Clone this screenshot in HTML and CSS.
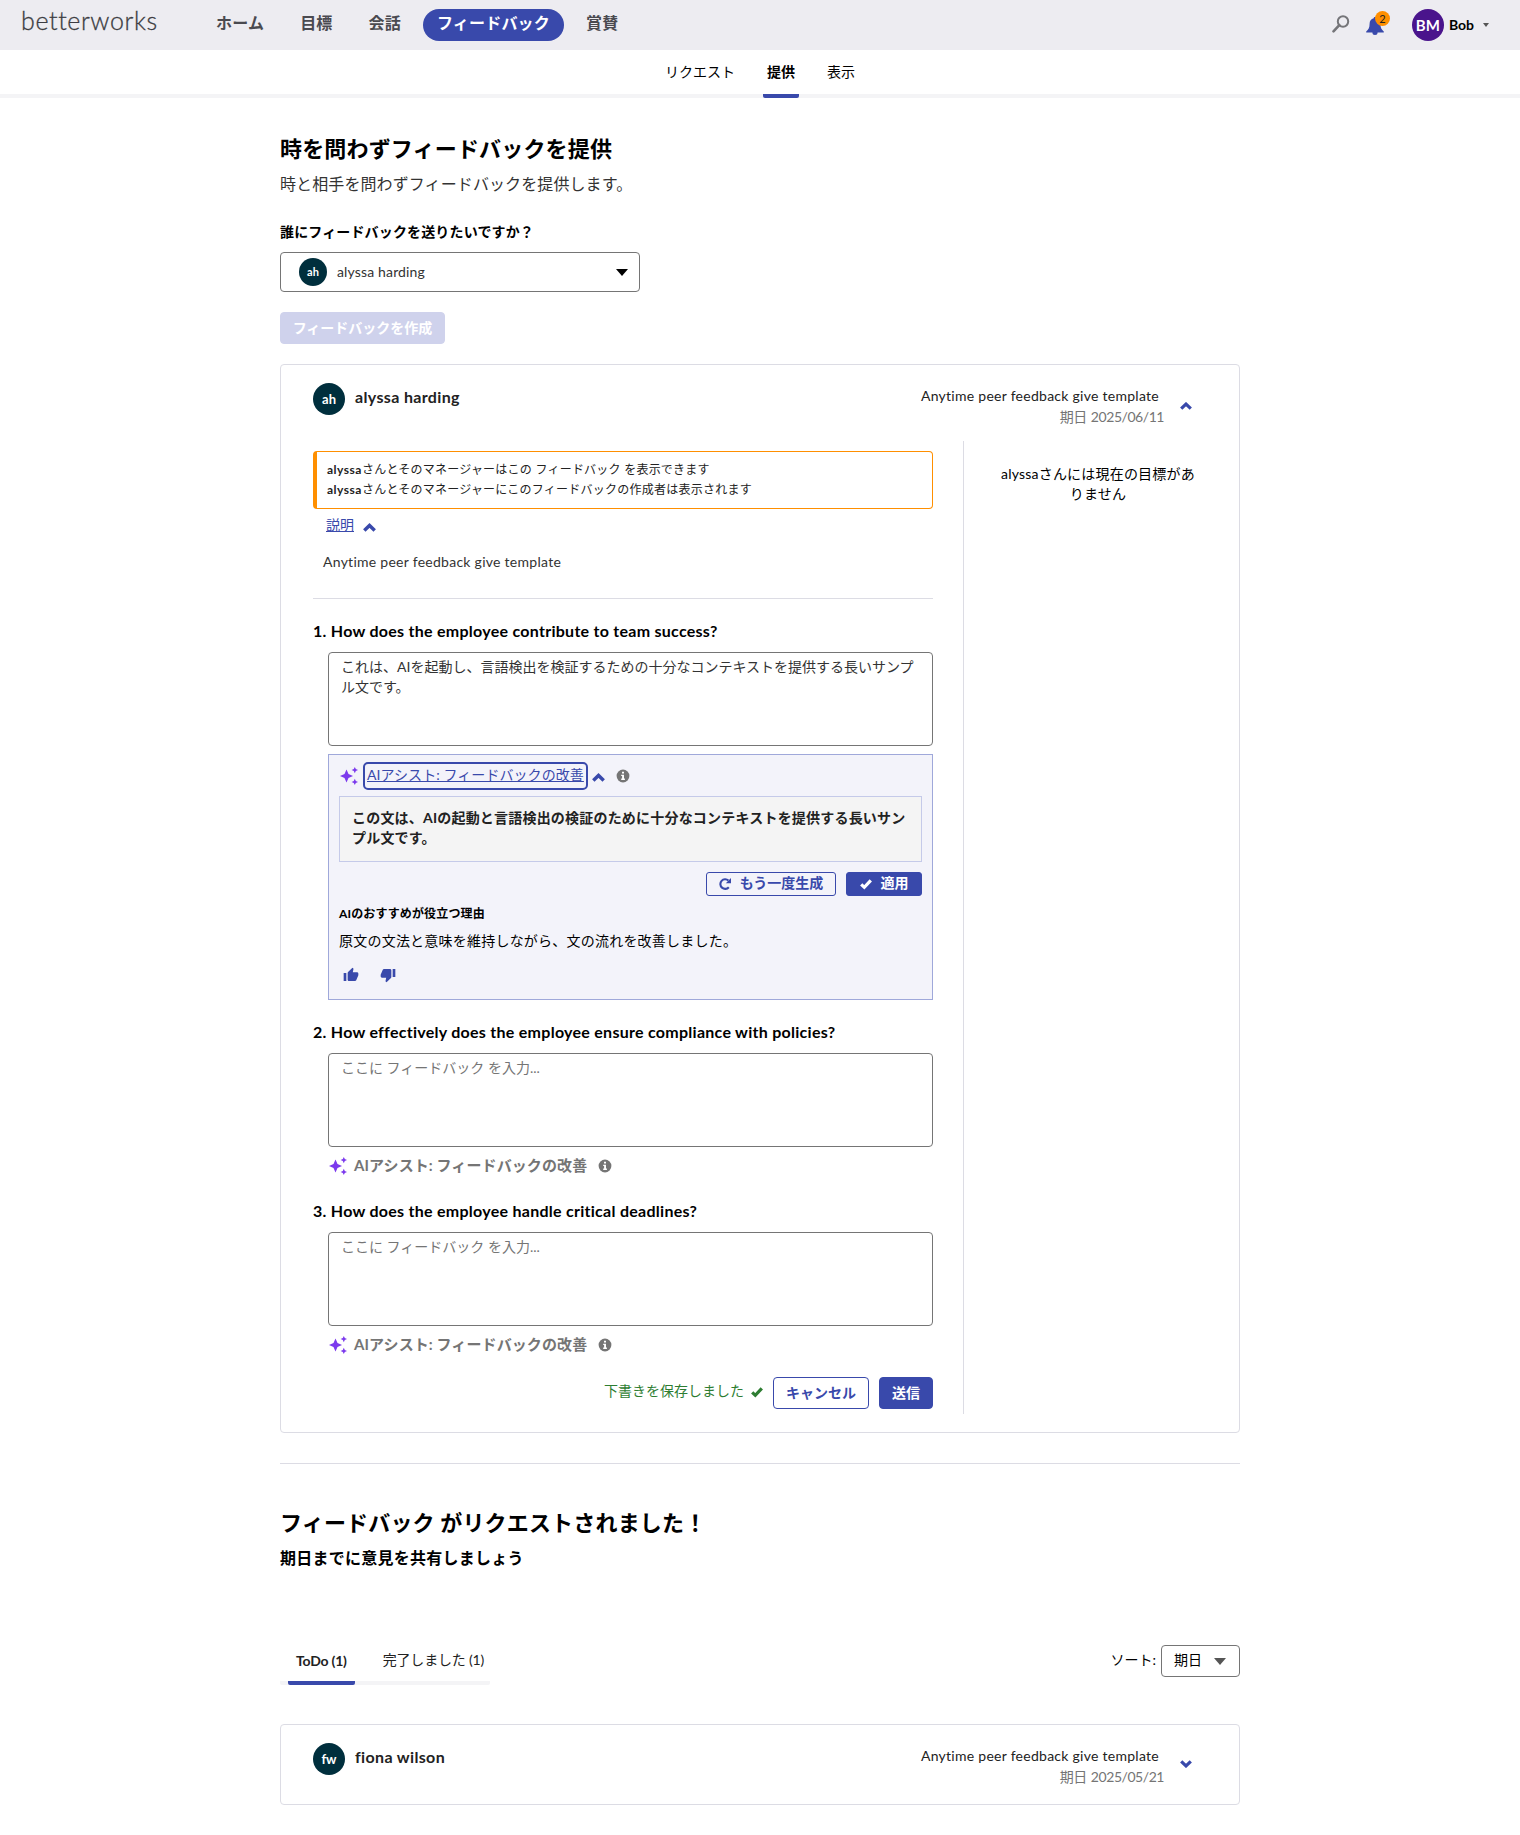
FILE: index.html
```
<!DOCTYPE html>
<html lang="ja">
<head>
<meta charset="utf-8">
<title>フィードバックを提供 | betterworks</title>
<link rel="stylesheet" href="styles.css">
</head>
<body>
<svg class="sprite" aria-hidden="true">
  <symbol id="chevron-up" viewBox="0 0 12 8"><path d="M1.200 6.700 6 2.100l4.800 4.600" fill="none" stroke="currentColor" stroke-width="3.200"/></symbol>
  <symbol id="chevron-down" viewBox="0 0 12 8"><path d="M1.200 1.300 6 5.900l4.800-4.600" fill="none" stroke="currentColor" stroke-width="3.200"/></symbol>
  <symbol id="sparkle" viewBox="0 0 18 18"><path d="M6.500 2.500 8.500 7 13 9 8.500 11 6.500 15.500 4.500 11 0 9l4.500-2zM14.800 0l1 2.100 2.200 1-2.200 1-1 2.100-1-2.100-2.200-1 2.200-1zM14.800 11.800l1 2.100 2.200 1-2.200 1-1 2.100-1-2.100-2.200-1 2.200-1z" fill="currentColor"/></symbol>
  <symbol id="info" viewBox="0 0 14 14"><circle cx="7" cy="7" r="6.400" fill="currentColor"/><path d="M6 2.800h2v1.800H6zM5.200 5.700H8v3.800h.9v1.400H5.200V9.500h.9V7.100h-.9z" fill="#fff"/></symbol>
  <symbol id="check" viewBox="0 0 12 11"><path d="M1.200 5.800 4.300 8.800 10.800 1.800" fill="none" stroke="currentColor" stroke-width="3.200"/></symbol>
  <symbol id="thumb" viewBox="0 0 24 24"><path d="M1 21h4V9H1zM23 10c0-1.100-.9-2-2-2h-6.310l.95-4.570.03-.32c0-.41-.17-.79-.44-1.060L14.170 1 7.590 7.590C7.220 7.950 7 8.450 7 9v10c0 1.100.9 2 2 2h9c.83 0 1.540-.5 1.840-1.220l3.020-7.050c.09-.23.14-.47.14-.73z" fill="currentColor"/></symbol>
</svg>

<header class="topbar">
  <a class="logo">betterworks</a>
  <nav class="mainnav">
    <a class="mainnav-item">ホーム</a>
    <a class="mainnav-item">目標</a>
    <a class="mainnav-item">会話</a>
    <a class="mainnav-item is-active">フィードバック</a>
    <a class="mainnav-item">賞賛</a>
  </nav>
  <div class="tools">
    <svg class="search" viewBox="0 0 18 18"><circle cx="11" cy="6.500" r="5.200" fill="none" stroke="currentColor" stroke-width="2"/><path d="M7.300 10.200 1.500 16.300" stroke="currentColor" stroke-width="2.600" stroke-linecap="round"/></svg>
    <div class="bell">
      <svg viewBox="0 0 18 18"><path d="M9 0c.8 0 1.300.5 1.300 1.200C13 1.800 14.400 4 14.400 6.700c0 4 1.200 5.800 3.400 7.800v1H.2v-1c2.200-2 3.400-3.800 3.400-7.800C3.600 4 5 1.800 7.700 1.200 7.700.5 8.200 0 9 0zM6.400 15.500h5.200a2.600 2.500 0 0 1-5.200 0z" fill="currentColor"/></svg>
      <span class="badge">2</span>
    </div>
    <span class="avatar avatar-me">BM</span>
    <span class="me">Bob</span>
    <span class="caret caret-sm"></span>
  </div>
</header>

<nav class="subnav">
  <a class="subnav-item">リクエスト</a>
  <a class="subnav-item is-active">提供</a>
  <a class="subnav-item">表示</a>
</nav>

<main class="page">
  <h1 class="title">時を問わずフィードバックを提供</h1>
  <p class="lead">時と相手を問わずフィードバックを提供します。</p>
  <p class="field-label">誰にフィードバックを送りたいですか？</p>
  <div class="picker">
    <span class="avatar avatar-sm">ah</span>
    <span class="picker-name">alyssa harding</span>
    <span class="caret"></span>
  </div>
  <button class="btn btn-disabled">フィードバックを作成</button>

  <section class="card card-open">
    <div class="card-head">
      <span class="avatar">ah</span>
      <span class="person">alyssa harding</span>
      <div class="meta">
        <div class="meta-template">Anytime peer feedback give template</div>
        <div class="meta-due">期日 2025/06/11</div>
      </div>
      <svg class="chev-head"><use href="#chevron-up"/></svg>
    </div>
    <div class="card-body">
      <div class="form">
        <div class="notice">
          <div><b>alyssa</b>さんとそのマネージャーはこの フィードバック を表示できます</div>
          <div><b>alyssa</b>さんとそのマネージャーにこのフィードバックの作成者は表示されます</div>
        </div>
        <div class="explain"><a class="link">説明</a><svg class="chev"><use href="#chevron-up"/></svg></div>
        <p class="explain-text">Anytime peer feedback give template</p>

        <h3 class="question">1. How does the employee contribute to team success?</h3>
        <textarea class="answer">これは、AIを起動し、言語検出を検証するための十分なコンテキストを提供する長いサンプル文です。</textarea>
        <div class="ai-panel">
          <div class="ai-head">
            <svg class="sparkle"><use href="#sparkle"/></svg>
            <a class="ai-toggle">AIアシスト: フィードバックの改善</a>
            <svg class="chev"><use href="#chevron-up"/></svg>
            <svg class="info"><use href="#info"/></svg>
          </div>
          <div class="suggestion">この文は、AIの起動と言語検出の検証のために十分なコンテキストを提供する長いサンプル文です。</div>
          <div class="ai-actions">
            <button class="btn btn-small btn-outline"><svg class="ico" viewBox="0 0 12 12"><path d="M9.800 9.200A4.800 4.800 0 1 1 9.400 2.500" fill="none" stroke="currentColor" stroke-width="2.100"/><path d="M12 0v5.200H6.800z" fill="currentColor"/></svg>もう一度生成</button>
            <button class="btn btn-small btn-primary"><svg class="ico"><use href="#check"/></svg>適用</button>
          </div>
          <h4 class="reason-title">AIのおすすめが役立つ理由</h4>
          <p class="reason">原文の文法と意味を維持しながら、文の流れを改善しました。</p>
          <div class="votes"><svg><use href="#thumb"/></svg><svg class="down"><use href="#thumb"/></svg></div>
        </div>

        <h3 class="question">2. How effectively does the employee ensure compliance with policies?</h3>
        <textarea class="answer" placeholder="ここに フィードバック を入力..."></textarea>
        <div class="ai-row"><svg class="sparkle"><use href="#sparkle"/></svg><span class="ai-label">AIアシスト: フィードバックの改善</span><svg class="info"><use href="#info"/></svg></div>

        <h3 class="question third">3. How does the employee handle critical deadlines?</h3>
        <textarea class="answer" placeholder="ここに フィードバック を入力..."></textarea>
        <div class="ai-row"><svg class="sparkle"><use href="#sparkle"/></svg><span class="ai-label">AIアシスト: フィードバックの改善</span><svg class="info"><use href="#info"/></svg></div>

        <div class="form-actions">
          <span class="saved">下書きを保存しました<svg class="ico"><use href="#check"/></svg></span>
          <button class="btn btn-outline">キャンセル</button>
          <button class="btn btn-primary">送信</button>
        </div>
      </div>
      <aside class="goals">alyssaさんには現在の目標がありません</aside>
    </div>
  </section>

  <hr class="rule">

  <h2 class="title">フィードバック がリクエストされました！</h2>
  <p class="subtitle">期日までに意見を共有しましょう</p>

  <div class="listbar">
    <div class="tabs">
      <a class="tab is-active">ToDo (1)</a>
      <a class="tab">完了しました (1)</a>
    </div>
    <div class="sort">ソート:<span class="sort-select">期日<span class="caret caret-grey"></span></span></div>
  </div>

  <section class="card">
    <div class="card-head">
      <span class="avatar">fw</span>
      <span class="person">fiona wilson</span>
      <div class="meta">
        <div class="meta-template">Anytime peer feedback give template</div>
        <div class="meta-due">期日 2025/05/21</div>
      </div>
      <svg class="chev-head chev-closed"><use href="#chevron-down"/></svg>
    </div>
  </section>
</main>
</body>
</html>
```
FILE: styles.css
```
* { box-sizing: border-box; }

body {
  margin: 0;
  background: #fff;
  color: #000;
  font: 14px/20px Lato, "Noto Sans CJK JP", sans-serif;
}

h1, h2, h3, h4, p { margin: 0; }

button, textarea { font: inherit; }

.sprite { display: none; }

/* Top bar */
.topbar {
  display: flex;
  align-items: center;
  height: 50px;
  padding: 0 31px 0 21px;
  background: #edecf1;
}
.logo {
  width: 181px;
  padding-bottom: 10px;
  color: #3c3c42;
  font-size: 25px;
  font-weight: 300;
  letter-spacing: .6px;
  -webkit-text-stroke: .3px #3c3c42;
}
.mainnav { display: flex; gap: 8px; }
.mainnav-item {
  height: 32px;
  padding: 0 14px;
  border-radius: 16px;
  color: #4a4a50;
  font-size: 16px;
  font-weight: 700;
  letter-spacing: .2px;
  line-height: 27px;
}
.mainnav-item.is-active { background: #3949ab; color: #fff; }
.tools { display: flex; align-items: center; margin-left: auto; }
.search { width: 18px; height: 18px; margin: 0 16px 2px 0; color: #757579; }
.bell { position: relative; width: 18px; height: 18px; margin: 2px 28px 0 0; color: #3949ab; }
.bell svg { display: block; width: 18px; height: 18px; }
.badge {
  position: absolute;
  top: -6px;
  right: -6px;
  width: 15px;
  height: 15px;
  border-radius: 50%;
  background: #ff8f00;
  color: #222;
  font-size: 11px;
  line-height: 15px;
  text-align: center;
}
.avatar {
  flex: none;
  width: 32px;
  height: 32px;
  border-radius: 50%;
  background: #002f3d;
  color: #fff;
  font-size: 13px;
  font-weight: 700;
  line-height: 32px;
  text-align: center;
}
.avatar-me { background: #4a148c; font-size: 15px; }
.avatar-sm { width: 28px; height: 28px; font-size: 11px; line-height: 27px; }
.me { margin: 0 9px 1px 5px; font-weight: 700; }

.caret {
  flex: none;
  border: solid transparent;
  border-width: 7px 6px 0;
  border-top-color: #000;
}
.caret-sm { border-width: 4px 3.500px 0; border-top-color: #555; }
.caret-grey { border-top-color: #555; }

/* Section tabs */
.subnav {
  display: flex;
  justify-content: center;
  gap: 24px;
  height: 48px;
  border-bottom: 4px solid #f4f4f6;
}
.subnav-item {
  height: 48px;
  padding: 12px 4px 0;
}
.subnav-item.is-active {
  border-bottom: 4px solid #3949ab;
  border-radius: 2px;
  font-weight: 700;
}

.page { width: 960px; margin: 0 auto; padding: 37px 0 20px; }
.title { font-size: 22px; font-weight: 700; letter-spacing: .17px; line-height: 28px; }
.lead { margin-top: 11px; color: #333; font-size: 16px; letter-spacing: .1px; }
.field-label { margin-top: 28px; font-weight: 700; letter-spacing: .15px; }
.picker {
  display: flex;
  align-items: center;
  width: 360px;
  height: 40px;
  margin-top: 10px;
  padding: 0 11px 0 18px;
  border: 1px solid #757575;
  border-radius: 4px;
}
.picker-name { flex: 1; margin-left: 10px; color: #333; letter-spacing: .15px; }

.btn {
  display: inline-flex;
  align-items: center;
  justify-content: center;
  height: 32px;
  padding: 0 12px;
  border: 1px solid #3949ab;
  border-radius: 4px;
  background: #fff;
  color: #3949ab;
  font-weight: 700;
  line-height: 20px;
  white-space: nowrap;
}
.btn-primary { background: #3949ab; color: #fff; }
.btn-outline { background: transparent; }
.btn-small { height: 24px; border-radius: 3px; padding: 0 0 3px; }
.btn-disabled { width: 165px; margin-top: 20px; padding: 0 0 1px; border-color: #cfd2ec; background: #cfd2ec; color: #fff; }

/* Feedback card */
.card {
  margin-top: 39px;
  border: 1px solid #dcdce4;
  border-radius: 4px;
  padding: 18px 32px;
}
.card-open { margin-top: 20px; }
.card-head { display: flex; height: 43px; }
.card-open .card-head { height: 58px; }
.person { margin: 4px 0 0 10px; color: #222; font-size: 16px; font-weight: 700; letter-spacing: .35px; }
.meta { margin: 3px 0 0 auto; text-align: right; }
.meta-template { padding: 0 5px 1px 0; color: #222; letter-spacing: .27px; }
.meta-due { color: #757575; letter-spacing: -.45px; word-spacing: 1px; }
.chev-head { width: 12px; height: 8px; margin: 19px 15px 0 16px; color: #3949ab; }
.chev-closed { margin-top: 17px; }
.card-body { display: flex; }
.form {
  width: 651px;
  padding: 10px 30px 5px 0;
  border-right: 1px solid #dcdce4;
}
.goals { flex: 1; padding: 23px 10px 0 35px; letter-spacing: .2px; text-align: center; }
.notice {
  height: 58px;
  padding: 8px 10px;
  border: 1px solid #ff8f00;
  border-left-width: 4px;
  border-radius: 4px;
  color: #222;
  font-size: 12px;
  letter-spacing: .24px;
}
.notice b { letter-spacing: .5px; }
.explain { display: flex; margin: 6px 0 0 13px; }
.link { color: #3949ab; text-decoration: underline; }
.chev { flex: none; width: 13px; height: 9px; color: #3949ab; }
.explain .chev { margin: 8px 0 0 9px; }
.explain-text {
  margin-top: 17px;
  padding: 0 0 26px 10px;
  border-bottom: 1px solid #dcdce4;
  color: #333;
  letter-spacing: .27px;
}
.question { margin-top: 22px; font-size: 16px; font-weight: 700; letter-spacing: .27px; }
.question.third { margin-top: 25px; }
.answer {
  display: block;
  width: 605px;
  height: 94px;
  margin: 11px 0 0 15px;
  padding: 4px 12px;
  border: 1px solid #757575;
  border-radius: 4px;
  background: #fff;
  color: #333;
  outline: 0;
  overflow: hidden;
  resize: none;
}
.answer::placeholder { color: #757575; }

/* AI assist */
.ai-panel {
  width: 605px;
  height: 246px;
  margin: 8px 0 0 15px;
  padding: 7px 10px;
  border: 1px solid #9fa8da;
  background: #f3f3fa;
}
.ai-head { display: flex; align-items: center; height: 28px; }
.sparkle { flex: none; width: 18px; height: 18px; color: #7c3aed; }
.ai-head .sparkle { margin: 0 5px 0 1px; }
.ai-toggle {
  width: 225px;
  height: 28px;
  padding: 0 2px;
  border: 2px solid #3949ab;
  border-radius: 5px;
  color: #3949ab;
  letter-spacing: .07px;
  line-height: 21px;
  text-decoration: underline;
  white-space: nowrap;
}
.ai-head .chev { margin: 3px 0 0 4px; }
.info { flex: none; width: 14px; height: 14px; color: #757575; }
.ai-head .info { margin-left: 11px; }
.suggestion {
  height: 66px;
  margin-top: 6px;
  padding: 11px 12px;
  border: 1px solid #c5cae9;
  background: #f4f4f4;
  color: #222;
  font-weight: 700;
  letter-spacing: .2px;
}
.ai-actions { display: flex; justify-content: flex-end; gap: 10px; margin-top: 10px; }
.ico { width: 12px; height: 12px; }
.btn .ico { flex: none; margin: 3px 9px 0 0; }
.btn-small.btn-outline { width: 130px; }
.btn-small.btn-primary { width: 76px; }
.reason-title { margin-top: 8px; font-size: 12px; font-weight: 700; letter-spacing: .15px; }
.reason { margin-top: 7px; letter-spacing: .22px; }
.votes { display: flex; gap: 21px; margin: 16px 0 0 4px; color: #3949ab; }
.votes svg { width: 16px; height: 16px; }
.votes .down { transform: rotate(180deg); }
.ai-row {
  display: flex;
  align-items: center;
  height: 20px;
  margin: 9px 0 0 16px;
  color: #757575;
  font-size: 15px;
  font-weight: 700;
}
.ai-label { padding-bottom: 2px; letter-spacing: .1px; }
.ai-row .sparkle { margin-right: 7px; }
.ai-row .info { margin-left: 11px; }

.form-actions { display: flex; justify-content: flex-end; gap: 10px; margin-top: 22px; }
.saved { padding-top: 4px; color: #2e7d32; }
.saved .ico { margin: 0 0 -2px 7px; }

.rule { height: 1px; margin: 30px 0 45px; border: 0; background: #dcdce4; }
.subtitle { margin-top: 11px; font-size: 16px; font-weight: 700; letter-spacing: .25px; }

/* Requested feedback list */
.listbar { display: flex; justify-content: space-between; height: 40px; margin-top: 77px; }
.tabs {
  display: flex;
  width: 210px;
  padding: 0 0 0 8px;
  border-bottom: 4px solid #f4f4f6;
  border-radius: 2px;
  white-space: nowrap;
}
.tab { height: 40px; padding: 5px 8px 0; color: #222; letter-spacing: -.2px; }
.tab.is-active {
  width: 67px;
  margin-right: 20px;
  padding-top: 6px;
  border-bottom: 4px solid #3949ab;
  border-radius: 2px;
  font-weight: 700;
}
.sort { display: flex; gap: 5px; line-height: 29px; }
.sort-select {
  display: flex;
  justify-content: space-between;
  width: 79px;
  height: 32px;
  padding: 0 13px 0 12px;
  border: 1px solid #757575;
  border-radius: 4px;
  line-height: 27px;
}
.sort-select .caret { margin-top: 12px; }
```
